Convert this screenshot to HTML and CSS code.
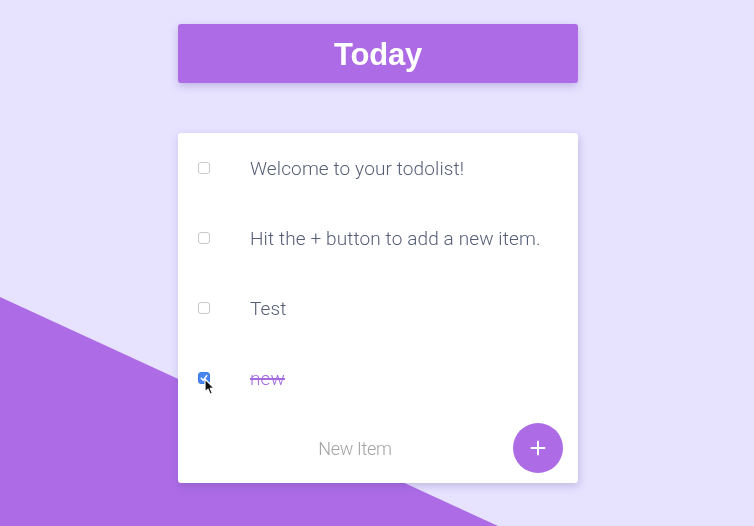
FILE: index.html
```html
<!DOCTYPE html>
<html lang="en">
<head>
<meta charset="utf-8">
<title>Today</title>
<link rel="stylesheet" href="styles.css">
</head>
<body>
<div class="backdrop"></div>
<main class="app">
  <header class="title-bar"><h1 class="title">Today</h1></header>
  <section class="card">
    <ul class="list">
      <li class="item"><span class="box"></span><span class="label">Welcome to your todolist!</span></li>
      <li class="item"><span class="box"></span><span class="label">Hit the + button to add a new item.</span></li>
      <li class="item"><span class="box"></span><span class="label">Test</span></li>
      <li class="item done">
        <span class="box checked">
          <svg class="tick" viewBox="0 0 12 12" width="12" height="12"><path d="M3.2 6.3 L5.2 8.3 L8.8 3.6" fill="none" stroke="#fff" stroke-width="1.5" stroke-linecap="round" stroke-linejoin="round"/></svg>
          <svg class="cursor" viewBox="0 0 12 18" width="12" height="18"><path d="M1 1 L1 14 L4 11.2 L6.2 16.2 L8.4 15.2 L6.3 10.4 L10.2 10.4 Z" fill="#111" stroke="#fff" stroke-width="1.2" stroke-linejoin="round"/></svg>
        </span>
        <span class="label">new</span>
      </li>
    </ul>
    <form class="footer">
      <span class="new-item">New Item</span>
      <button class="add" type="button">
        <svg viewBox="0 0 16 16" width="16" height="16"><path d="M8 1.5 V14.5 M1.5 8 H14.5" stroke="#fff" stroke-width="2" stroke-linecap="round"/></svg>
      </button>
    </form>
  </section>
</main>
</body>
</html>
```
FILE: styles.css
```css
html, body {
  margin: 0;
  padding: 0;
  height: 100%;
}
body {
  background: #e7e3ff;
  font-family: "Liberation Sans", Arial, sans-serif;
  overflow: hidden;
}
.backdrop {
  position: fixed;
  inset: 0;
  background: #ad6ce6;
  clip-path: polygon(0 297px, 498px 526px, 0 526px);
  z-index: 0;
}
.app {
  position: relative;
  z-index: 1;
  width: 400px;
  margin: 0 auto;
  padding-top: 24px;
  transform: translateX(1px);
}
.title-bar {
  height: 59px;
  background: #ad6ce6;
  border-radius: 3px;
  box-shadow: 0 3px 8px rgba(90, 60, 150, 0.28);
  display: flex;
  align-items: center;
  justify-content: center;
}
.title {
  margin: 0;
  padding-top: 2px;
  color: #fff;
  font-family: "Liberation Sans", Arial, sans-serif;
  font-weight: 700;
  font-size: 31px;
  letter-spacing: -0.2px;
}
.card {
  margin-top: 50px;
  background: #fff;
  border-radius: 3px;
  box-shadow: 1px 3px 8px rgba(80, 60, 140, 0.25);
  height: 350px;
  display: flex;
  flex-direction: column;
}
.list {
  list-style: none;
  margin: 0;
  padding: 0;
}
.item {
  height: 70px;
  display: flex;
  align-items: center;
  padding-left: 20px;
}
.box {
  position: relative;
  width: 10px;
  height: 10px;
  border: 1px solid #c9c9cc;
  border-radius: 3px;
  flex: none;
  margin-right: 40px;
}
.box.checked {
  background: #4a86f0;
  border-color: #3d78e6;
}
.tick {
  position: absolute;
  left: -1px;
  top: -1px;
}
.cursor {
  position: absolute;
  left: 5px;
  top: 5px;
}
.label {
  font-family: Roboto, "Liberation Sans", sans-serif;
  font-weight: 300;
  font-size: 19px;
  color: #565e76;
  letter-spacing: 0.12px;
}
.done .label {
  color: #a56ae0;
  text-decoration: line-through;
  text-decoration-thickness: 1.5px;
}
.footer {
  flex: 1;
  display: flex;
  align-items: center;
  margin: 0;
  padding-right: 15px;
}
.new-item {
  flex: 1;
  text-align: center;
  padding-left: 19px;
  font-family: Roboto, "Liberation Sans", sans-serif;
  font-weight: 300;
  font-size: 18px;
  color: #a3a3a6;
  letter-spacing: -0.3px;
}
.add {
  width: 50px;
  height: 50px;
  border-radius: 50%;
  border: none;
  background: #ad6ce6;
  display: flex;
  align-items: center;
  justify-content: center;
  padding: 0;
}
```
